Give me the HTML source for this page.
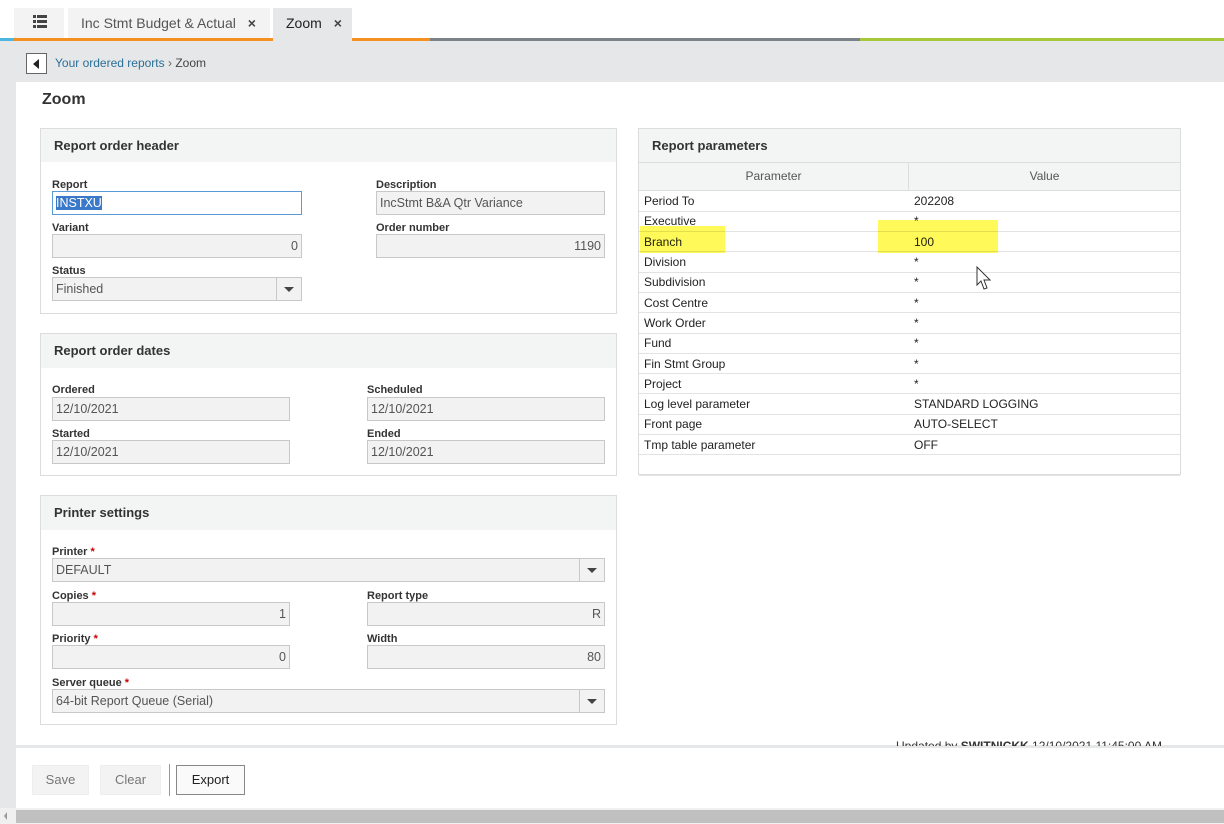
<!DOCTYPE html>
<html><head><meta charset="utf-8"><style>
*{box-sizing:border-box;margin:0;padding:0}
body{width:1224px;height:824px;position:relative;overflow:hidden;background:#e6e7e8;font-family:"Liberation Sans",sans-serif;font-size:12px;color:#222}
.a{position:absolute}
.box{position:absolute;background:#fff;border:1px solid #dcdcdc}
.bh{position:absolute;left:0;right:0;top:0;background:#f3f4f4;font-weight:bold;font-size:13px;color:#333;padding-left:13px}
.lbl{position:absolute;font-size:11px;font-weight:bold;color:#333}
.in{position:absolute;height:24px;background:#f2f2f2;border:1px solid #c8c8c8;font-size:12.5px;color:#555;line-height:22px;padding:0 3px}
.r{text-align:right}
.dd{position:absolute;right:0;top:-1px;width:25px;height:24px;border-left:1px solid #c8c8c8}
.dd:after{content:"";position:absolute;left:7px;top:10px;border-left:5px solid transparent;border-right:5px solid transparent;border-top:5px solid #444}
.star{color:#c00}
table{border-collapse:collapse;width:100%}
td{height:20.3px;border-bottom:1px solid #e3e3e3;font-size:12px;padding-left:5px;color:#222}
.btn{position:absolute;top:765px;height:30px;background:#f3f3f3;border:1px solid #eee;font-size:13px;color:#777;text-align:center;line-height:28px}
.hl{position:absolute;background:#fff95a;mix-blend-mode:multiply}
</style></head><body>
<div class="a" style="left:0;top:0;width:1224px;height:38px;background:#fff"></div>
<div class="a" style="left:14px;top:8px;width:50px;height:30px;background:#f3f3f3"></div>
<svg class="a" style="left:33px;top:15px" width="14" height="13" viewBox="0 0 14 13"><g fill="#444"><rect x="0" y="0" width="3" height="3"/><rect x="4" y="0" width="10" height="3"/><rect x="0" y="5" width="3" height="3"/><rect x="4" y="5" width="10" height="3"/><rect x="0" y="10" width="3" height="3"/><rect x="4" y="10" width="10" height="3"/></g></svg>
<div class="a" style="left:68px;top:8px;width:202px;height:30px;background:#f3f3f3;font-size:14px;color:#555;line-height:30px;padding-left:13px">Inc Stmt Budget &amp; Actual <span style="margin-left:8px;color:#444;font-weight:bold">×</span></div>
<div class="a" style="left:273px;top:8px;width:79px;height:33px;background:#e6e7e8;font-size:14px;color:#222;line-height:30px;padding-left:13px">Zoom <span style="margin-left:8px;color:#444;font-weight:bold">×</span></div>
<div class="a" style="left:0;top:38px;width:14px;height:3px;background:#4cb5e0"></div>
<div class="a" style="left:14px;top:38px;width:259px;height:3px;background:#f39020"></div>
<div class="a" style="left:352px;top:38px;width:78px;height:3px;background:#f39020"></div>
<div class="a" style="left:430px;top:38px;width:430px;height:3px;background:#7b8389"></div>
<div class="a" style="left:860px;top:38px;width:364px;height:3px;background:#a6c83a"></div>
<div class="a" style="left:26px;top:53px;width:21px;height:21px;border:1px solid #666;background:#fff"><div class="a" style="left:6px;top:5px;border-top:5px solid transparent;border-bottom:5px solid transparent;border-right:6px solid #222"></div></div>
<div class="a" style="left:55px;top:56px;font-size:12px;color:#2a6f97">Your ordered reports <span style="color:#666">›</span> <span style="color:#444">Zoom</span></div>
<div class="a" style="left:16px;top:82px;width:1208px;height:663px;background:#fff"></div>
<div class="a" style="left:42px;top:91px;font-size:16px;font-weight:bold;color:#333">Zoom</div>

<div class="box" style="left:40px;top:128px;width:577px;height:186px"><div class="bh" style="height:33px;line-height:33px">Report order header</div></div>
<div class="lbl" style="left:52px;top:179px">Report</div>
<div class="in" style="left:52px;top:191px;width:250px;background:#fff;border-color:#5b9bd5"><span style="background:#3a78c9;color:#fff">INSTXU</span></div>
<div class="lbl" style="left:376px;top:179px">Description</div>
<div class="in" style="left:376px;top:191px;width:229px">IncStmt B&amp;A Qtr Variance</div>
<div class="lbl" style="left:52px;top:222px">Variant</div>
<div class="in r" style="left:52px;top:234px;width:250px">0</div>
<div class="lbl" style="left:376px;top:222px">Order number</div>
<div class="in r" style="left:376px;top:234px;width:229px">1190</div>
<div class="lbl" style="left:52px;top:265px">Status</div>
<div class="in" style="left:52px;top:277px;width:250px">Finished<div class="dd"></div></div>

<div class="box" style="left:40px;top:333px;width:577px;height:143px"><div class="bh" style="height:34px;line-height:34px">Report order dates</div></div>
<div class="lbl" style="left:52px;top:384px">Ordered</div>
<div class="in" style="left:52px;top:397px;width:238px">12/10/2021</div>
<div class="lbl" style="left:367px;top:384px">Scheduled</div>
<div class="in" style="left:367px;top:397px;width:238px">12/10/2021</div>
<div class="lbl" style="left:52px;top:428px">Started</div>
<div class="in" style="left:52px;top:440px;width:238px">12/10/2021</div>
<div class="lbl" style="left:367px;top:428px">Ended</div>
<div class="in" style="left:367px;top:440px;width:238px">12/10/2021</div>

<div class="box" style="left:40px;top:495px;width:577px;height:230px"><div class="bh" style="height:34px;line-height:34px">Printer settings</div></div>
<div class="lbl" style="left:52px;top:546px">Printer <span class="star">*</span></div>
<div class="in" style="left:52px;top:558px;width:553px">DEFAULT<div class="dd"></div></div>
<div class="lbl" style="left:52px;top:590px">Copies <span class="star">*</span></div>
<div class="in r" style="left:52px;top:602px;width:238px">1</div>
<div class="lbl" style="left:367px;top:590px">Report type</div>
<div class="in r" style="left:367px;top:602px;width:238px">R</div>
<div class="lbl" style="left:52px;top:633px">Priority <span class="star">*</span></div>
<div class="in r" style="left:52px;top:645px;width:238px">0</div>
<div class="lbl" style="left:367px;top:633px">Width</div>
<div class="in r" style="left:367px;top:645px;width:238px">80</div>
<div class="lbl" style="left:52px;top:677px">Server queue <span class="star">*</span></div>
<div class="in" style="left:52px;top:689px;width:553px">64-bit Report Queue (Serial)<div class="dd"></div></div>

<div class="box" style="left:638px;top:128px;width:543px;height:347px">
<div class="bh" style="height:33px;line-height:33px;position:relative">Report parameters</div>
<div style="height:29px;background:#f3f4f4;border-top:1px solid #ddd;border-bottom:1px solid #ddd;display:flex;font-size:12px;color:#555;line-height:27px"><div style="width:270px;text-align:center;border-right:1px solid #ddd">Parameter</div><div style="flex:1;text-align:center">Value</div></div>
<table>
<tr><td style="width:270px">Period To</td><td>202208</td></tr>
<tr><td>Executive</td><td>*</td></tr>
<tr><td>Branch</td><td>100</td></tr>
<tr><td>Division</td><td>*</td></tr>
<tr><td>Subdivision</td><td>*</td></tr>
<tr><td>Cost Centre</td><td>*</td></tr>
<tr><td>Work Order</td><td>*</td></tr>
<tr><td>Fund</td><td>*</td></tr>
<tr><td>Fin Stmt Group</td><td>*</td></tr>
<tr><td>Project</td><td>*</td></tr>
<tr><td>Log level parameter</td><td>STANDARD LOGGING</td></tr>
<tr><td>Front page</td><td>AUTO-SELECT</td></tr>
<tr><td>Tmp table parameter</td><td>OFF</td></tr>
<tr><td></td><td></td></tr>
</table></div>
<div class="hl" style="left:640px;top:226px;width:85px;height:27px"></div>
<div class="hl" style="left:878px;top:220px;width:120px;height:33px"></div>
<svg class="a" style="left:976px;top:266px" width="18" height="26" viewBox="0 0 18 26"><path d="M1 1 L1 19 L5 15 L8 23 L11 22 L8 14 L14 14 Z" fill="#fff" stroke="#333" stroke-width="1"/></svg>

<div class="a" style="left:896px;top:738px;font-size:12px;color:#333;height:8px;overflow:hidden;line-height:16px">Updated by <b>SWITNICKK</b> 12/10/2021 11:45:00 AM</div>
<div class="a" style="left:16px;top:748px;width:1208px;height:60px;background:#fff"></div>
<div class="btn" style="left:32px;width:57px">Save</div>
<div class="btn" style="left:100px;width:61px">Clear</div>
<div class="a" style="left:169px;top:764px;width:1px;height:32px;background:#999"></div>
<div class="btn" style="left:176px;width:69px;background:#fafafa;border:1px solid #888;color:#222">Export</div>
<div class="a" style="left:0;top:808px;width:1224px;height:16px;background:#f0f0f0"></div>
<div class="a" style="left:16px;top:810px;width:1208px;height:13px;background:#c0c0c0"></div>
<div class="a" style="left:4px;top:812px;border-top:4px solid transparent;border-bottom:4px solid transparent;border-right:3px solid #999"></div>
</body></html>
